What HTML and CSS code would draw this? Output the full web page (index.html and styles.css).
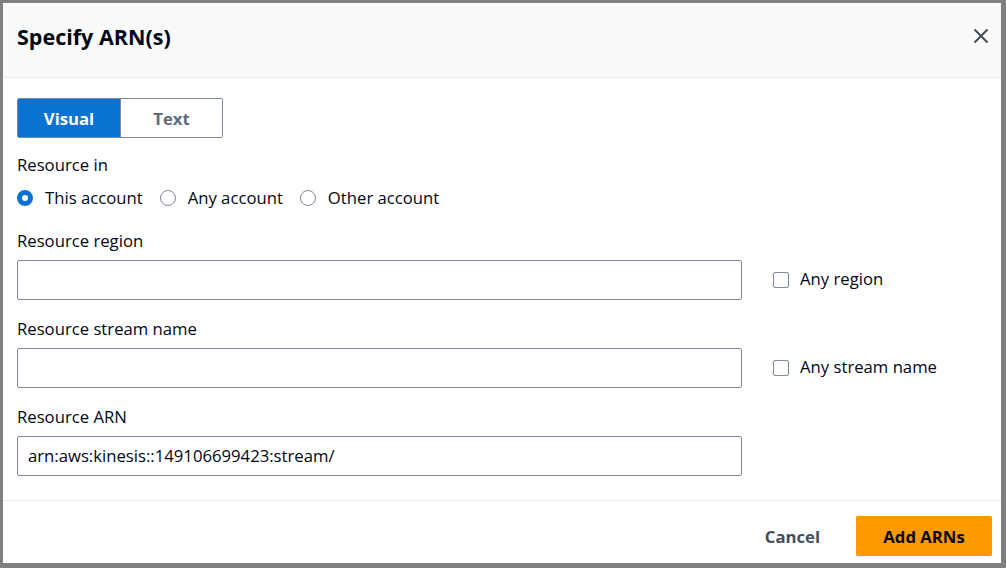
FILE: index.html
```html
<!DOCTYPE html>
<html lang="en">
<head>
<meta charset="utf-8">
<title>Specify ARN(s)</title>
<link rel="stylesheet" href="styles.css">
</head>
<body>
<div class="modal">
  <header class="modal-header">
    <h2 class="modal-title">Specify ARN(s)</h2>
    <button class="close-btn" aria-label="Close">
      <svg width="16" height="16" viewBox="0 0 16 16"><path d="M1.5 1.5l13 13M14.5 1.5l-13 13" stroke="#414d5c" stroke-width="2" fill="none"/></svg>
    </button>
  </header>
  <div class="modal-body">
    <div class="segmented">
      <button class="seg seg-active">Visual</button>
      <button class="seg">Text</button>
    </div>

    <div class="field-radio">
      <div class="label">Resource in</div>
      <div class="radio-group">
        <label class="radio"><span class="radio-dot checked"></span>This account</label>
        <label class="radio"><span class="radio-dot"></span>Any account</label>
        <label class="radio"><span class="radio-dot"></span>Other account</label>
      </div>
    </div>

    <div class="field">
      <div class="label">Resource region</div>
      <div class="input-row">
        <div class="input"></div>
        <label class="check"><span class="check-box"></span>Any region</label>
      </div>
    </div>

    <div class="field">
      <div class="label">Resource stream name</div>
      <div class="input-row">
        <div class="input"></div>
        <label class="check"><span class="check-box"></span>Any stream name</label>
      </div>
    </div>

    <div class="field">
      <div class="label">Resource ARN</div>
      <div class="input-row">
        <div class="input">arn:aws:kinesis::149106699423:stream/</div>
      </div>
    </div>
  </div>
  <footer class="modal-footer">
    <button class="btn-link">Cancel</button>
    <button class="btn-primary">Add ARNs</button>
  </footer>
</div>
</body>
</html>
```
FILE: styles.css
```css
* { box-sizing: border-box; }

html, body {
  margin: 0;
  height: 100%;
}

body {
  background: #808080;
  padding: 3px 5px 5px 3px;
  font-family: "Open Sans", "Noto Sans", sans-serif;
  font-size: 16.7px;
  color: #000716;
}

.modal {
  background: #ffffff;
  height: 560px;
  display: flex;
  flex-direction: column;
}

.modal-header {
  height: 75px;
  flex: none;
  background: #fafafa;
  border-bottom: 1px solid #e9ebed;
  display: flex;
  align-items: flex-start;
  justify-content: space-between;
  padding: 21px 12px 0 14px;
}

.modal-title {
  margin: 0;
  font-size: 21.5px;
  font-weight: 700;
  line-height: 26px;
}

.close-btn {
  background: none;
  border: 0;
  padding: 0;
  width: 16px;
  height: 16px;
  margin-top: 4px;
  display: flex;
}

.modal-body {
  padding: 20px 14px 0 14px;
  flex: 1;
}

.segmented {
  display: flex;
  width: fit-content;
  height: 40px;
  border: 1px solid #7d8998;
  border-radius: 2px;
  overflow: hidden;
}

.seg {
  width: 102px;
  border: 0;
  background: #ffffff;
  color: #5f6b7a;
  font: inherit;
  font-weight: 700;
  padding: 0;
}

.seg + .seg {
  border-left: 1px solid #7d8998;
}

.seg-active {
  background: #0972d3;
  color: #ffffff;
}

.label {
  line-height: 22px;
}

.field-radio {
  margin-top: 16px;
}

.radio-group {
  display: flex;
  gap: 17px;
  margin-top: 11px;
  line-height: 22px;
}

.radio {
  display: flex;
  align-items: center;
  gap: 12px;
}

.radio-dot {
  width: 16px;
  height: 16px;
  border-radius: 50%;
  border: 1.5px solid #7d8998;
  background: #ffffff;
}

.radio-dot.checked {
  border: 5px solid #0972d3;
}

.field {
  margin-top: 18px;
}

.field-radio + .field {
  margin-top: 21px;
}

.input-row {
  display: flex;
  align-items: center;
  margin-top: 8px;
}

.input {
  width: 725px;
  height: 40px;
  border: 1px solid #7d8998;
  border-radius: 2px;
  padding: 0 10px;
  display: flex;
  align-items: center;
  line-height: 22px;
}

.check {
  display: flex;
  align-items: center;
  gap: 11px;
  margin-left: 31px;
  margin-top: -3px;
}

.check-box {
  width: 16px;
  height: 16px;
  border: 1.5px solid #7d8998;
  border-radius: 2px;
  margin-top: 2px;
}

.modal-footer {
  border-top: 1px solid #e9ebed;
  height: 63px;
  flex: none;
  display: flex;
  align-items: flex-start;
  justify-content: flex-end;
  gap: 16px;
  padding: 15px 9px 0 0;
}

.btn-link {
  background: none;
  border: 0;
  font: inherit;
  font-weight: 700;
  color: #414d5c;
  padding: 0 20px;
  height: 40px;
}

.btn-primary {
  background: #ff9900;
  border: 0;
  border-radius: 2px;
  font: inherit;
  font-weight: 700;
  color: #000716;
  width: 136px;
  height: 40px;
}
```
